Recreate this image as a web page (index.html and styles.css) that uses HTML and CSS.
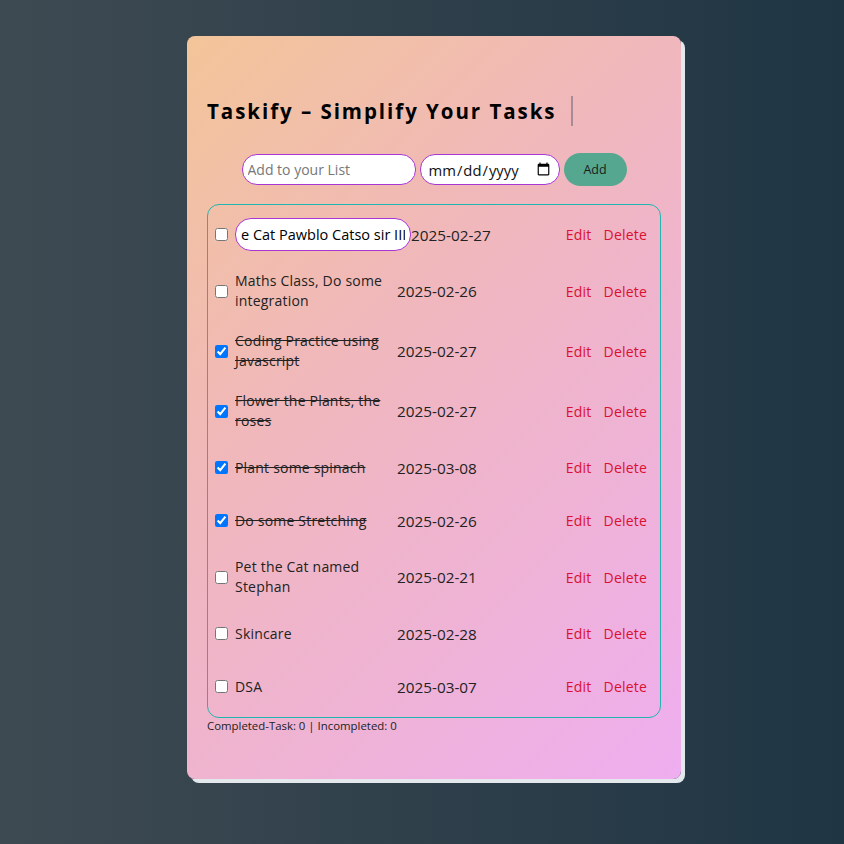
FILE: index.html
```html
<!DOCTYPE html>
<html lang="en">
<head>
<meta charset="UTF-8">
<title>Taskify</title>
<link rel="stylesheet" href="styles.css">
</head>
<body>
<main class="card">
  <h1 class="title">Taskify – Simplify Your Tasks</h1>
  <form class="add-row">
    <input class="field text-field" type="text" placeholder="Add to your List">
    <input class="field date-field" type="date">
    <button class="add-btn" type="button">Add</button>
  </form>
  <ul class="list">
    <li class="item">
      <input type="checkbox" class="check">
      <input class="edit-field" type="text" value="e Cat Pawblo Catso sir III">
      <span class="date">2025-02-27</span>
      <span class="actions"><button class="act">Edit</button><button class="act">Delete</button></span>
    </li>
    <li class="item">
      <input type="checkbox" class="check">
      <span class="text">Maths Class, Do some integration</span>
      <span class="date">2025-02-26</span>
      <span class="actions"><button class="act">Edit</button><button class="act">Delete</button></span>
    </li>
    <li class="item done">
      <input type="checkbox" class="check" checked>
      <span class="text">Coding Practice using Javascript</span>
      <span class="date">2025-02-27</span>
      <span class="actions"><button class="act">Edit</button><button class="act">Delete</button></span>
    </li>
    <li class="item done">
      <input type="checkbox" class="check" checked>
      <span class="text">Flower the Plants, the roses</span>
      <span class="date">2025-02-27</span>
      <span class="actions"><button class="act">Edit</button><button class="act">Delete</button></span>
    </li>
    <li class="item done">
      <input type="checkbox" class="check" checked>
      <span class="text">Plant some spinach</span>
      <span class="date">2025-03-08</span>
      <span class="actions"><button class="act">Edit</button><button class="act">Delete</button></span>
    </li>
    <li class="item done">
      <input type="checkbox" class="check" checked>
      <span class="text">Do some Stretching</span>
      <span class="date">2025-02-26</span>
      <span class="actions"><button class="act">Edit</button><button class="act">Delete</button></span>
    </li>
    <li class="item">
      <input type="checkbox" class="check">
      <span class="text">Pet the Cat named Stephan</span>
      <span class="date">2025-02-21</span>
      <span class="actions"><button class="act">Edit</button><button class="act">Delete</button></span>
    </li>
    <li class="item">
      <input type="checkbox" class="check">
      <span class="text">Skincare</span>
      <span class="date">2025-02-28</span>
      <span class="actions"><button class="act">Edit</button><button class="act">Delete</button></span>
    </li>
    <li class="item">
      <input type="checkbox" class="check">
      <span class="text">DSA</span>
      <span class="date">2025-03-07</span>
      <span class="actions"><button class="act">Edit</button><button class="act">Delete</button></span>
    </li>
  </ul>
  <p class="stats">Completed-Task: 0 | Incompleted: 0</p>
</main>
</body>
</html>
```
FILE: styles.css
```css
* { box-sizing: border-box; }

html, body { height: 100%; }

body {
  margin: 0;
  padding: 36px 0 0 187px;
  background: linear-gradient(to right, #3e4a52, #1f3543);
  font-family: "Open Sans", "Liberation Sans", sans-serif;
  color: #222;
}

.card {
  width: 494px;
  height: 743px;
  padding: 20px 20px;
  border-radius: 8px;
  background: linear-gradient(135deg, #f3c599 0%, #f0b7bd 40%, #eeaef0 100%);
  box-shadow: 4px 4px 0 #e3e8ec;
}

.title {
  display: inline-block;
  margin: 40px 0 0 0;
  padding-right: 14px;
  height: 30px;
  line-height: 30px;
  font-size: 20.5px;
  font-weight: 700;
  letter-spacing: 1.95px;
  color: #000;
  border-right: 2px solid rgba(110, 100, 120, 0.55);
  white-space: nowrap;
}

.add-row {
  display: flex;
  justify-content: center;
  align-items: center;
  gap: 4px;
  margin: 27px 0 0 0;
  height: 33px;
}

.field {
  height: 31px;
  border: 1px solid #a836d2;
  border-radius: 15px;
  background: #fff;
  font-family: inherit;
  color: #111;
  outline: none;
}

.text-field {
  width: 174px;
  padding: 0 5px;
  font-size: 14px;
}

.text-field::placeholder { color: #777; }

.date-field {
  width: 140px;
  padding: 0 6px 0 7px;
  font-size: 14.8px;
}

.add-btn {
  width: 63px;
  height: 33px;
  border: none;
  border-radius: 17px;
  background: #55a88f;
  color: #1a1a1a;
  font-family: inherit;
  font-size: 12.5px;
}

.list {
  list-style: none;
  margin: 18px 0 0 0;
  padding: 3px 0 4px 0;
  border: 1px solid #1fb5b0;
  border-radius: 12px;
}

.item {
  display: flex;
  align-items: center;
  padding: 10px 7px 10px 5px;
  font-size: 14px;
  line-height: 20px;
}

.check {
  width: 13px;
  height: 13px;
  margin: 0 7px 0 2px;
  flex: none;
}

.text {
  width: 162px;
  flex: none;
  padding-right: 8px;
  letter-spacing: 0.2px;
}

.done .text { text-decoration: line-through; }

.edit-field {
  width: 176px;
  height: 33px;
  flex: none;
  padding: 0 5px;
  border: 1px solid #a836d2;
  border-radius: 16px;
  background: #fff;
  font-family: inherit;
  font-size: 14.5px;
  color: #000;
  outline: none;
}

.date {
  flex: none;
  font-size: 15.3px;
}

.actions {
  margin-left: auto;
  display: flex;
}

.act {
  padding: 6px 6px;
  line-height: 21px;
  border: none;
  background: transparent;
  color: #dc1030;
  font-family: inherit;
  font-size: 14px;
  letter-spacing: 0.2px;
}

.stats {
  margin: 0;
  font-size: 11.4px;
  line-height: 16px;
  color: #222;
}
```
